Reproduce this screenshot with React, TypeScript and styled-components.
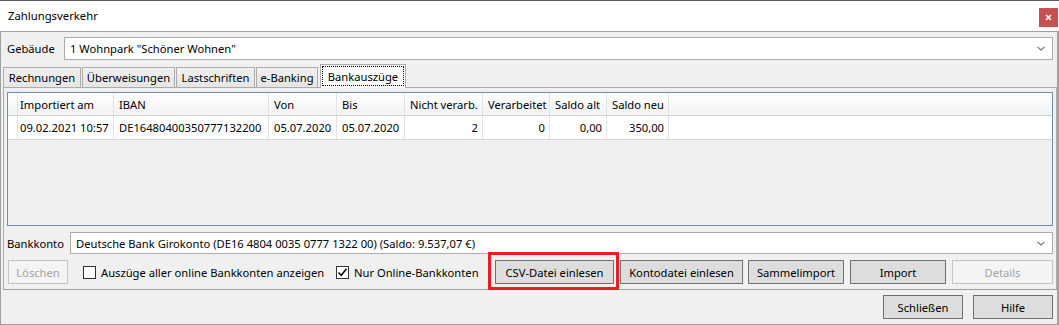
import styled, { createGlobalStyle } from "styled-components";

const GlobalStyle = createGlobalStyle`
  html, body {
    margin: 0;
    padding: 0;
    background: #ffffff;
  }
  body {
    font-family: "Noto Sans", "Open Sans", sans-serif;
    font-size: 11.2px;
    color: #000;
  }
  * {
    box-sizing: border-box;
  }
`;

const Window = styled.div`
  width: 1059px;
  height: 325px;
  display: flex;
  flex-direction: column;
  border-top: 1px solid #5f5f5f;
  background: #ffffff;
`;

const TitleBar = styled.div`
  height: 30px;
  display: flex;
  align-items: flex-start;
  justify-content: space-between;
  padding: 0 1px 0 8px;
`;

const Title = styled.span`
  margin-top: 6px;
  font-size: 11.3px;
  line-height: 18px;
`;

const CloseButton = styled.div`
  margin-top: 7px;
  width: 19px;
  height: 19px;
  background: #c75050;
  display: flex;
  align-items: center;
  justify-content: center;
`;

const Body = styled.div`
  flex: 1;
  display: flex;
  flex-direction: column;
  background: #f0f0f0;
  border: 1px solid #a0a0a0;
  border-right-width: 2px;
  width: 1059px;
`;

const FieldRow = styled.div<{ $top: number }>`
  display: flex;
  align-items: center;
  margin-top: ${(p) => p.$top}px;
`;

const Label = styled.span<{ $width: number }>`
  width: ${(p) => p.$width}px;
  flex-shrink: 0;
`;

const Combo = styled.div<{ $height: number }>`
  flex: 1;
  height: ${(p) => p.$height}px;
  background: #ffffff;
  border: 1px solid #acacac;
  display: flex;
  align-items: center;
  justify-content: space-between;
  padding: 0 7px 0 5px;
  white-space: nowrap;
`;

const TopArea = styled.div`
  padding: 5px 4px 0 6px;
`;

const TabStrip = styled.div`
  height: 23px;
  margin-top: 4px;
  padding-left: 2px;
  display: flex;
  align-items: flex-end;
  gap: 1px;
  position: relative;
  z-index: 1;
`;

const Tab = styled.div<{ $width: number; $active?: boolean }>`
  width: ${(p) => p.$width}px;
  height: ${(p) => (p.$active ? 24 : 20)}px;
  margin-bottom: ${(p) => (p.$active ? -1 : 0)}px;
  margin-left: ${(p) => (p.$active ? 1 : 0)}px;
  background: ${(p) =>
    p.$active ? "#ffffff" : "linear-gradient(#f0f0f0, #e5e5e5)"};
  border: 1px solid #acacac;
  border-bottom: none;
  display: flex;
  align-items: center;
  justify-content: center;
  padding: ${(p) => (p.$active ? "2px 2px 3px" : "0")};
`;

const FocusText = styled.span`
  flex: 1;
  align-self: stretch;
  display: flex;
  align-items: center;
  justify-content: center;
  outline: 1px dotted #000;
`;

const TabPanel = styled.div`
  margin-left: 2px;
  width: 1054px;
  border: 1px solid #acacac;
  border-bottom-color: #a0a0a0;
  padding: 4px 3px 5px 3px;
  display: flex;
  flex-direction: column;
`;

const Grid = styled.div`
  height: 134px;
  border: 1px solid #6d8db3;
  background: #f0f0f0;
`;

const GridRow = styled.div<{ $header?: boolean }>`
  display: grid;
  grid-template-columns: 7px 99px 155px 68px 68px 78px 67px 57px 62px 1fr;
  height: ${(p) => (p.$header ? 23 : 24)}px;
  background: ${(p) =>
    p.$header ? "linear-gradient(#ffffff, #f1f2f4)" : "#ffffff"};
  border-bottom: 1px solid #d5d5d5;
`;

const Cell = styled.div<{ $right?: boolean; $last?: boolean }>`
  border-right: ${(p) => (p.$last ? "none" : "1px solid #e2e2e2")};
  display: flex;
  align-items: center;
  justify-content: ${(p) => (p.$right ? "flex-end" : "flex-start")};
  padding: 0 4px 0 5px;
  white-space: nowrap;
  overflow: hidden;
`;

const ActionRow = styled.div`
  margin-top: 6px;
  height: 24px;
  display: flex;
  align-items: stretch;
`;

const Button = styled.div<{ $width: number; $gap?: number; $disabled?: boolean }>`
  width: ${(p) => p.$width}px;
  margin-left: ${(p) => p.$gap ?? 0}px;
  flex-shrink: 0;
  background: ${(p) => (p.$disabled ? "#f4f4f4" : "#dddddd")};
  border: 1px solid ${(p) => (p.$disabled ? "#c4c4c4" : "#707070")};
  color: ${(p) => (p.$disabled ? "#a3a3a3" : "#000")};
  display: flex;
  align-items: center;
  justify-content: center;
  white-space: nowrap;
`;

const CheckItem = styled.label<{ $width: number; $gap?: number }>`
  width: ${(p) => p.$width}px;
  margin-left: ${(p) => p.$gap ?? 0}px;
  flex-shrink: 0;
  display: flex;
  align-items: center;
  gap: 5px;
  white-space: nowrap;
`;

const Box = styled.span`
  width: 13px;
  height: 13px;
  background: #ffffff;
  border: 1px solid #333333;
  display: flex;
  align-items: center;
  justify-content: center;
`;

const Highlight = styled.div`
  position: relative;
  display: flex;
  &::after {
    content: "";
    position: absolute;
    top: -8px;
    left: -7px;
    right: -5px;
    bottom: -6px;
    border: 3px solid #ea1c24;
    pointer-events: none;
  }
`;

const BottomBar = styled.div`
  flex: 1;
  display: flex;
  justify-content: flex-end;
  align-items: flex-start;
  padding: 5px 4px 0 0;
`;

const FooterButton = styled(Button)`
  height: 24px;
`;

const columns = [
  { title: "", right: false },
  { title: "Importiert am", right: false },
  { title: "IBAN", right: false },
  { title: "Von", right: false },
  { title: "Bis", right: false },
  { title: "Nicht verarb.", right: true },
  { title: "Verarbeitet", right: true },
  { title: "Saldo alt", right: true },
  { title: "Saldo neu", right: true },
  { title: "", right: false },
];

const rows = [
  ["", "09.02.2021 10:57", "DE16480400350777132200", "05.07.2020", "05.07.2020", "2", "0", "0,00", "350,00", ""],
];

const tabs = [
  { name: "Rechnungen", width: 78 },
  { name: "Überweisungen", width: 93 },
  { name: "Lastschriften", width: 79 },
  { name: "e-Banking", width: 62 },
];

function Chevron() {
  return (
    <svg width="8" height="5" viewBox="0 0 8 5">
      <path d="M0.5 0.8 L4 4 L7.5 0.8" fill="none" stroke="#707070" strokeWidth="1.1" />
    </svg>
  );
}

function Check({ checked }: { checked?: boolean }) {
  return (
    <Box>
      {checked && (
        <svg width="11" height="11" viewBox="0 0 11 11">
          <path d="M1.5 5.5 L4.2 8.3 L9.5 1.8" fill="none" stroke="#000" strokeWidth="1.5" />
        </svg>
      )}
    </Box>
  );
}

export default function App() {
  return (
    <>
      <GlobalStyle />
      <Window>
        <TitleBar>
          <Title>Zahlungsverkehr</Title>
          <CloseButton>
            <svg width="7" height="7" viewBox="0 0 7 7">
              <path d="M1 1 L6 6 M6 1 L1 6" stroke="#fff" strokeWidth="1.6" />
            </svg>
          </CloseButton>
        </TitleBar>
        <Body>
          <TopArea>
            <FieldRow $top={0}>
              <Label $width={57}>Gebäude</Label>
              <Combo $height={23}>
                <span>1 Wohnpark "Schöner Wohnen"</span>
                <Chevron />
              </Combo>
            </FieldRow>
          </TopArea>
          <TabStrip>
            {tabs.map((t) => (
              <Tab key={t.name} $width={t.width}>
                {t.name}
              </Tab>
            ))}
            <Tab $width={86} $active>
              <FocusText>Bankauszüge</FocusText>
            </Tab>
          </TabStrip>
          <TabPanel>
            <Grid>
              <GridRow $header>
                {columns.map((c, i) => (
                  <Cell key={i} $last={i === columns.length - 1}>
                    {c.title}
                  </Cell>
                ))}
              </GridRow>
              {rows.map((r, ri) => (
                <GridRow key={ri}>
                  {r.map((v, i) => (
                    <Cell key={i} $right={columns[i].right} $last={i === r.length - 1}>
                      {v}
                    </Cell>
                  ))}
                </GridRow>
              ))}
            </Grid>
            <FieldRow $top={6}>
              <Label $width={63}>Bankkonto</Label>
              <Combo $height={22}>
                <span>Deutsche Bank Girokonto (DE16 4804 0035 0777 1322 00) (Saldo: 9.537,07 €)</span>
                <Chevron />
              </Combo>
            </FieldRow>
            <ActionRow>
              <Button $width={60} $gap={1} $disabled>
                Löschen
              </Button>
              <CheckItem $width={253} $gap={15}>
                <Check />
                Auszüge aller online Bankkonten anzeigen
              </CheckItem>
              <CheckItem $width={159}>
                <Check checked />
                Nur Online-Bankkonten
              </CheckItem>
              <Highlight>
                <Button $width={119}>CSV-Datei einlesen</Button>
              </Highlight>
              <Button $width={123} $gap={6}>
                Kontodatei einlesen
              </Button>
              <Button $width={96} $gap={5}>
                Sammelimport
              </Button>
              <Button $width={96} $gap={6}>
                Import
              </Button>
              <Button $width={101} $gap={6} $disabled>
                Details
              </Button>
            </ActionRow>
          </TabPanel>
          <BottomBar>
            <FooterButton $width={80}>Schließen</FooterButton>
            <FooterButton $width={80} $gap={10}>
              Hilfe
            </FooterButton>
          </BottomBar>
        </Body>
      </Window>
    </>
  );
}
